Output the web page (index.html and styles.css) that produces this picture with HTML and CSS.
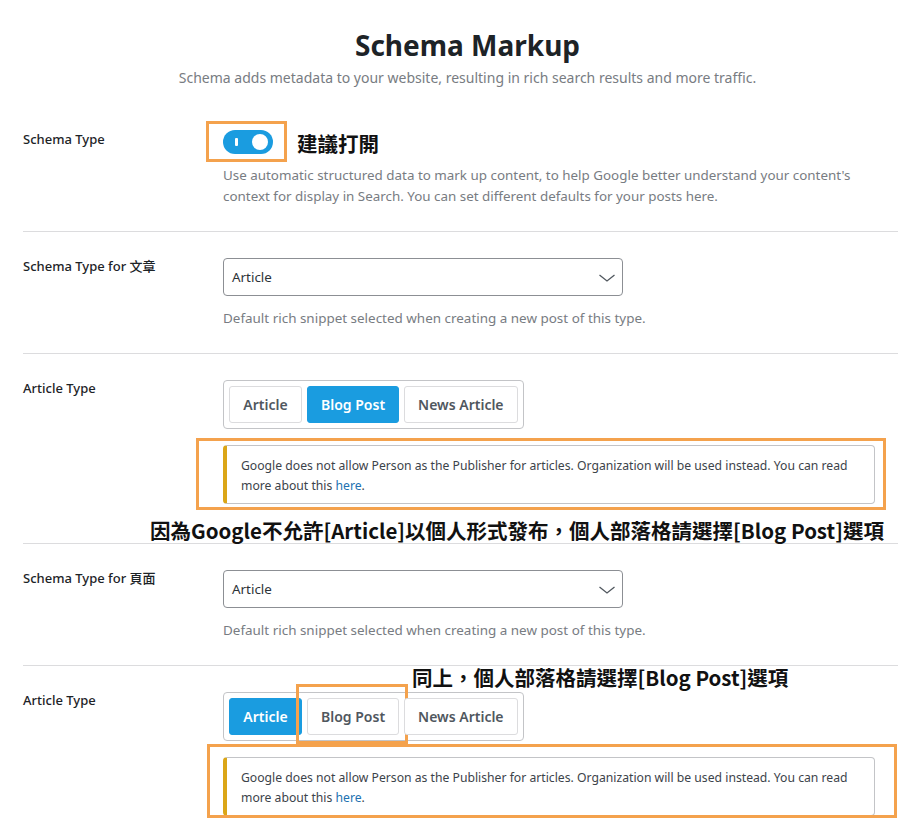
FILE: index.html
```html
<!DOCTYPE html>
<html lang="zh-Hant">
<head>
<meta charset="utf-8">
<title>Schema Markup</title>
<link rel="stylesheet" href="styles.css">
</head>
<body>
<div class="page">
  <header class="header">
    <h1 class="title">Schema Markup</h1>
    <p class="subtitle">Schema adds metadata to your website, resulting in rich search results and more traffic.</p>
  </header>

  <section class="row row-first">
    <div class="label">Schema Type</div>
    <div class="control">
      <div class="toggle-line">
        <span class="toggle-wrap">
          <span class="toggle"><span class="toggle-bar"></span><span class="toggle-knob"></span></span>
          <span class="mark mark-toggle"></span>
        </span>
        <span class="note note-inline">建議打開</span>
      </div>
      <p class="desc">Use automatic structured data to mark up content, to help Google better understand your content's context for display in Search. You can set different defaults for your posts here.</p>
    </div>
  </section>

  <section class="row">
    <div class="label">Schema Type for 文章</div>
    <div class="control">
      <div class="select"><span>Article</span>
        <svg class="chevron" width="16" height="8" viewBox="0 0 16 8"><path d="M0.5 1 L8 7 L15.5 1" fill="none" stroke="#50575e" stroke-width="1.3"/></svg>
      </div>
      <p class="help">Default rich snippet selected when creating a new post of this type.</p>
    </div>
  </section>

  <section class="row row-notice">
    <div class="label">Article Type</div>
    <div class="control">
      <div class="btn-group">
        <span class="btn">Article</span>
        <span class="btn btn-active">Blog Post</span>
        <span class="btn">News Article</span>
      </div>
      <div class="notice-wrap">
        <div class="notice">Google does not allow Person as the Publisher for articles. Organization will be used instead. You can read more about this <a href="#">here</a>.</div>
        <span class="mark mark-notice-1"></span>
      </div>
    </div>
    <div class="note note-1">因為Google不允許[Article]以個人形式發布，個人部落格請選擇[Blog Post]選項</div>
  </section>

  <section class="row">
    <div class="label">Schema Type for 頁面</div>
    <div class="control">
      <div class="select"><span>Article</span>
        <svg class="chevron" width="16" height="8" viewBox="0 0 16 8"><path d="M0.5 1 L8 7 L15.5 1" fill="none" stroke="#50575e" stroke-width="1.3"/></svg>
      </div>
      <p class="help">Default rich snippet selected when creating a new post of this type.</p>
    </div>
  </section>

  <section class="row row-last">
    <div class="note note-2">同上，個人部落格請選擇[Blog Post]選項</div>
    <div class="label">Article Type</div>
    <div class="control">
      <div class="btn-group">
        <span class="btn btn-active">Article</span>
        <span class="btn btn-marked">Blog Post<span class="mark mark-btn"></span></span>
        <span class="btn">News Article</span>
      </div>
      <div class="notice-wrap">
        <div class="notice">Google does not allow Person as the Publisher for articles. Organization will be used instead. You can read more about this <a href="#">here</a>.</div>
        <span class="mark mark-notice-2"></span>
      </div>
    </div>
  </section>
</div>
</body>
</html>
```

FILE: styles.css
```css
* { box-sizing: border-box; }

html, body {
  margin: 0;
  padding: 0;
  background: #fff;
  overflow-x: hidden;
}

body {
  font-family: "Noto Sans", "Noto Sans CJK TC", sans-serif;
  color: #1d2327;
}

.page {
  margin-left: 23px;
  width: 889px;
}

.header {
  text-align: center;
  padding-top: 27px;
}

.title {
  margin: 0;
  font-size: 28px;
  line-height: 36px;
  font-weight: 700;
  color: #1d2327;
}

.subtitle {
  margin: 5px 0 0;
  font-size: 14px;
  line-height: 20px;
  color: #787c82;
}

.row {
  position: relative;
  display: grid;
  grid-template-columns: 200px 1fr;
  padding: 24px 0 24px;
  border-bottom: 1px solid #dcdcde;
}

.row-first {
  padding-top: 41px;
  padding-bottom: 24px;
}

.row-notice {
  padding-bottom: 39px;
}

.row-last {
  border-bottom: none;
  padding-bottom: 10px;
}

.label {
  font-size: 13px;
  line-height: 20px;
  font-weight: 500;
  color: #1d2327;
}

.control {
  min-width: 0;
}

.toggle-line {
  display: flex;
  align-items: center;
  gap: 24px;
  margin-top: 1px;
  height: 24px;
}

.toggle-wrap {
  position: relative;
  display: inline-block;
  width: 50px;
  height: 24px;
}

.toggle {
  position: relative;
  display: block;
  width: 50px;
  height: 24px;
  border-radius: 12px;
  background: #1a9ce0;
}

.toggle-bar {
  position: absolute;
  left: 12px;
  top: 8px;
  width: 3px;
  height: 8px;
  background: #fff;
  border-radius: 1px;
}

.toggle-knob {
  position: absolute;
  right: 5px;
  top: 4px;
  width: 16px;
  height: 16px;
  border-radius: 50%;
  background: #fff;
}

.note {
  font-family: "Noto Sans CJK TC", sans-serif;
  font-weight: 700;
  font-size: 20.5px;
  line-height: 24px;
  color: #111;
  white-space: nowrap;
}

.note-inline {
  margin-top: 2px;
}

.note-1 {
  position: absolute;
  left: 127px;
  bottom: 1px;
}

.note-2 {
  position: absolute;
  left: 389px;
  top: -1px;
}

.desc {
  margin: 11px 0 0;
  font-size: 13.4px;
  line-height: 21px;
  color: #787c82;
  max-width: 650px;
}

.select {
  position: relative;
  margin-top: 2px;
  width: 400px;
  height: 38px;
  border: 1px solid #8c8f94;
  border-radius: 4px;
  display: flex;
  align-items: center;
  padding: 0 8px;
  font-size: 13.4px;
  color: #2c3338;
}

.chevron {
  position: absolute;
  right: 7px;
  top: 15px;
}

.help {
  margin: 12px 0 0;
  font-size: 13.45px;
  line-height: 21px;
  color: #787c82;
}

.btn-group {
  display: inline-flex;
  gap: 5px;
  margin-top: 2px;
  padding: 5px;
  border: 1px solid #c3c4c7;
  border-radius: 4px;
}

.btn {
  position: relative;
  display: inline-flex;
  align-items: center;
  justify-content: center;
  height: 37px;
  padding: 0 13px;
  min-width: 73px;
  border: 1px solid #dcdcde;
  border-radius: 3px;
  font-size: 14px;
  font-weight: 600;
  color: #50575e;
  background: #fff;
}

.btn-active {
  background: #1a9ce0;
  border-color: #1a9ce0;
  color: #fff;
}

.notice-wrap {
  position: relative;
  margin-top: 16px;
  width: 652px;
}

.notice {
  border: 1px solid #c3c4c7;
  border-left: 4px solid #dba617;
  border-radius: 4px;
  padding: 10px 14px 7px 14px;
  font-size: 12.2px;
  line-height: 20px;
  color: #3c434a;
  background: #fff;
}

.notice a {
  color: #2271b1;
  text-decoration: none;
}

.mark {
  position: absolute;
  border: 3px solid #f4a24d;
  pointer-events: none;
}

.mark-toggle {
  left: -17px;
  top: -9px;
  width: 81px;
  height: 41px;
}

.mark-notice-1 {
  left: -27px;
  top: -7px;
  right: -11px;
  bottom: -6px;
}

.mark-notice-2 {
  left: -16px;
  top: -13px;
  right: -22px;
  bottom: -2px;
}

.mark-btn {
  left: -12px;
  top: -15px;
  right: -10px;
  bottom: -10px;
}
```
